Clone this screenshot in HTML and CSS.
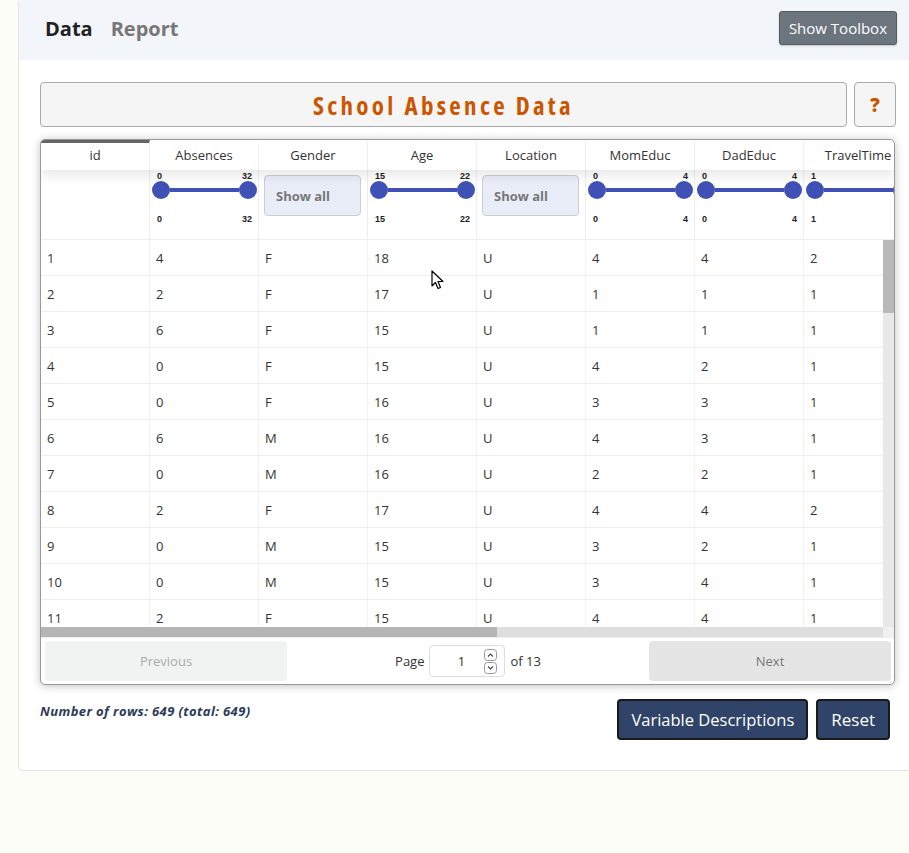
FILE: index.html
```html
<!DOCTYPE html>
<html>
<head>
<meta charset="utf-8">
<link rel="stylesheet" href="styles.css">
</head>
<body>
<div class="card">
  <div class="topbar">
    <div class="tabs">
      <span class="tab active">Data</span>
      <span class="tab">Report</span>
    </div>
    <button class="toolbox-btn">Show Toolbox</button>
  </div>
  <div class="content">
    <div class="title-row">
      <div class="title-box">School Absence Data</div>
      <div class="help-box">?</div>
    </div>
    <div class="grid-box">
      <div class="thead">
        <div class="hrow">
          <div class="hc sorted">id</div>
          <div class="hc">Absences</div>
          <div class="hc">Gender</div>
          <div class="hc">Age</div>
          <div class="hc">Location</div>
          <div class="hc">MomEduc</div>
          <div class="hc">DadEduc</div>
          <div class="hc">TravelTime</div>
        </div>
        <div class="frow">
          <div class="fc"></div>
          <div class="fc"><div class="slider"><div class="lbls"><span>0</span><span>32</span></div><div class="track"><i class="knob"></i><i class="bar"></i><i class="knob"></i></div><div class="lbls low"><span>0</span><span>32</span></div></div></div>
          <div class="fc"><div class="select">Show all</div></div>
          <div class="fc"><div class="slider"><div class="lbls"><span>15</span><span>22</span></div><div class="track"><i class="knob"></i><i class="bar"></i><i class="knob"></i></div><div class="lbls low"><span>15</span><span>22</span></div></div></div>
          <div class="fc"><div class="select">Show all</div></div>
          <div class="fc"><div class="slider"><div class="lbls"><span>0</span><span>4</span></div><div class="track"><i class="knob"></i><i class="bar"></i><i class="knob"></i></div><div class="lbls low"><span>0</span><span>4</span></div></div></div>
          <div class="fc"><div class="slider"><div class="lbls"><span>0</span><span>4</span></div><div class="track"><i class="knob"></i><i class="bar"></i><i class="knob"></i></div><div class="lbls low"><span>0</span><span>4</span></div></div></div>
          <div class="fc"><div class="slider"><div class="lbls"><span>1</span><span>4</span></div><div class="track"><i class="knob"></i><i class="bar"></i><i class="knob"></i></div><div class="lbls low"><span>1</span><span>4</span></div></div></div>
        </div>
      </div>
      <div class="tbody-wrap">
        <div class="tbody">
          <div class="row"><div>1</div><div>4</div><div>F</div><div>18</div><div>U</div><div>4</div><div>4</div><div>2</div></div>
          <div class="row"><div>2</div><div>2</div><div>F</div><div>17</div><div>U</div><div>1</div><div>1</div><div>1</div></div>
          <div class="row"><div>3</div><div>6</div><div>F</div><div>15</div><div>U</div><div>1</div><div>1</div><div>1</div></div>
          <div class="row"><div>4</div><div>0</div><div>F</div><div>15</div><div>U</div><div>4</div><div>2</div><div>1</div></div>
          <div class="row"><div>5</div><div>0</div><div>F</div><div>16</div><div>U</div><div>3</div><div>3</div><div>1</div></div>
          <div class="row"><div>6</div><div>6</div><div>M</div><div>16</div><div>U</div><div>4</div><div>3</div><div>1</div></div>
          <div class="row"><div>7</div><div>0</div><div>M</div><div>16</div><div>U</div><div>2</div><div>2</div><div>1</div></div>
          <div class="row"><div>8</div><div>2</div><div>F</div><div>17</div><div>U</div><div>4</div><div>4</div><div>2</div></div>
          <div class="row"><div>9</div><div>0</div><div>M</div><div>15</div><div>U</div><div>3</div><div>2</div><div>1</div></div>
          <div class="row"><div>10</div><div>0</div><div>M</div><div>15</div><div>U</div><div>3</div><div>4</div><div>1</div></div>
          <div class="row"><div>11</div><div>2</div><div>F</div><div>15</div><div>U</div><div>4</div><div>4</div><div>1</div></div>
        </div>
        <div class="vscroll"><div class="vthumb"></div></div>
      </div>
      <div class="hscroll"><div class="htrack"><div class="hthumb"></div></div><div class="corner"></div></div>
      <div class="pager">
        <button class="pbtn prev">Previous</button>
        <div class="pinfo">
          <span>Page</span>
          <div class="pinput"><span class="pnum">1</span>
            <svg class="spin" width="13" height="25" viewBox="0 0 13 25">
              <rect x="0.5" y="0.5" width="12" height="11" rx="3" fill="#fff" stroke="#999"/>
              <rect x="0.5" y="13.5" width="12" height="11" rx="3" fill="#fff" stroke="#999"/>
              <path d="M4 7.5 L6.5 5 L9 7.5" fill="none" stroke="#444" stroke-width="1.1"/>
              <path d="M4 17.5 L6.5 20 L9 17.5" fill="none" stroke="#444" stroke-width="1.1"/>
            </svg>
          </div>
          <span>of 13</span>
        </div>
        <button class="pbtn next">Next</button>
      </div>
    </div>
    <div class="footer-row">
      <div class="count">Number of rows: 649 (total: 649)</div>
      <div class="actions">
        <button class="navy-btn">Variable Descriptions</button>
        <button class="navy-btn reset">Reset</button>
      </div>
    </div>
  </div>
</div>
<svg class="cursor" width="13" height="21" viewBox="0 0 13 21"><path d="M1 1 L1 16 L4.5 12.5 L7 18.5 L9.5 17.5 L7 11.5 L12 11.5 Z" fill="#fff" stroke="#000" stroke-width="1.2" stroke-linejoin="round"/></svg>
</body>
</html>
```
FILE: styles.css
```css
html, body {
  margin: 0;
  padding: 0;
  background: #fdfdf7;
  overflow: hidden;
  font-family: "Open Sans", "Liberation Sans", sans-serif;
  color: #333;
}
body { position: relative; width: 909px; height: 853px; }

.card {
  margin-left: 18px;
  margin-top: -1px;
  width: 900px;
  height: 772px;
  box-sizing: border-box;
  background: #fff;
  border: 1px solid #e2e2e2;
  border-radius: 4px;
}

.topbar {
  height: 60px;
  background: #f2f5f9;
  display: flex;
  align-items: center;
  justify-content: space-between;
  padding: 0 20px 3px 26px;
  box-sizing: border-box;
}
.tabs { display: flex; gap: 18px; }
.tab { font-size: 20px; font-weight: 700; color: #777; }
.tab.active { color: #222; }
.toolbox-btn {
  font-family: "Open Sans", sans-serif;
  font-size: 15px;
  color: #fff;
  background: #6c757d;
  border: 1px solid #555d63;
  border-radius: 3px;
  height: 34px;
  padding: 0 9px;
  margin-bottom: 1px;
  box-shadow: 0 1px 2px rgba(0,0,0,0.2);
}

.content { padding: 22px 21px 0 21px; }

.title-row { display: flex; gap: 7px; height: 45px; }
.title-box {
  flex: 1;
  background: #f5f5f5;
  border: 1px solid #aaa;
  border-radius: 4px;
  display: flex;
  align-items: center;
  justify-content: center;
  color: #cc5500;
  font-weight: 700;
  font-size: 25px;
  font-stretch: 75%;
  letter-spacing: 3.3px;
}
.help-box {
  width: 42px;
  box-sizing: border-box;
  background: #f5f5f5;
  border: 1px solid #aaa;
  border-radius: 4px;
  display: flex;
  align-items: center;
  justify-content: center;
  color: #cc5500;
  font-weight: 800;
  font-size: 19px;
}

.grid-box {
  margin-top: 12px;
  width: 855px;
  box-sizing: border-box;
  border: 1px solid #999;
  border-radius: 5px;
  overflow: hidden;
  box-shadow: 0 1px 8px rgba(0,0,0,0.25);
  background: #fff;
}

.thead {
  overflow: hidden;
  position: relative;
}
.hrow, .frow, .row {
  display: grid;
  grid-template-columns: repeat(8, 109px);
}
.hrow {
  height: 30px;
  box-shadow: 0 6px 12px rgba(0,0,0,0.09);
  position: relative;
  z-index: 1;
}
.hc {
  border-right: 1px solid #eee;
  border-top: 3px solid transparent;
  box-sizing: border-box;
  display: flex;
  align-items: center;
  justify-content: center;
  font-size: 13px;
  color: #333;
  padding-bottom: 3px;
}
.hc.sorted { border-top-color: #666; }

.frow { height: 70px; border-bottom: 1px solid #eee; box-sizing: border-box; }
.fc {
  border-right: 1px solid #eee;
  box-sizing: border-box;
  padding: 1px 1px 0 2px;
}
.slider { display: flex; flex-direction: column; }
.lbls {
  display: flex;
  justify-content: space-between;
  padding: 0 5px 0 5px;
  font-family: "Liberation Sans", Arial, sans-serif;
  font-weight: 700;
  font-size: 9px;
  line-height: 10px;
  color: #222;
}
.lbls.low { margin-top: 15px; }
.track { display: flex; align-items: center; height: 18px; }
.knob {
  width: 18px;
  height: 18px;
  border-radius: 50%;
  background: #3f51b5;
  flex: none;
}
.bar { flex: 1; height: 4px; background: #3f51b5; }

.select {
  margin: 4px 0 0 3px;
  width: 97px;
  height: 41px;
  box-sizing: border-box;
  background: #e8edf7;
  border: 1px solid #c9cdd4;
  border-radius: 4px;
  display: flex;
  align-items: center;
  padding-left: 11px;
  font-size: 13px;
  font-weight: 700;
  color: #777;
}

.tbody-wrap { display: flex; height: 387px; }
.tbody { flex: 1; overflow: hidden; }
.row {
  height: 36px;
  box-sizing: border-box;
  border-bottom: 1px solid #eee;
}
.row > div {
  border-right: 1px solid #f2f2f2;
  display: flex;
  align-items: center;
  padding-left: 6px;
  font-size: 13px;
  color: #333;
}
.vscroll { width: 11px; background: #e8e8e8; flex: none; }
.vthumb { height: 73px; background: #b8b8b8; }

.hscroll { display: flex; height: 10px; }
.htrack { flex: 1; background: #dedede; }
.hthumb { width: 456px; height: 100%; background: #b5b5b5; }
.corner { width: 11px; background: #f0f0f0; }

.pager {
  display: flex;
  align-items: center;
  padding: 3px 3px 3px 4px;
  height: 47px;
  box-sizing: border-box;
  border-top: 1px solid #eee;
}
.pbtn {
  width: 242px;
  height: 40px;
  border: none;
  border-radius: 4px;
  font-family: "Open Sans", sans-serif;
  font-size: 13px;
}
.prev { background: #f1f2f2; color: #aaa; }
.next { background: #e5e5e5; color: #777; }
.pinfo {
  flex: 1;
  display: flex;
  align-items: center;
  justify-content: center;
  gap: 5px;
  font-size: 13px;
  color: #333;
}
.pinput {
  width: 76px;
  height: 32px;
  box-sizing: border-box;
  border: 1px solid #ddd;
  border-radius: 4px;
  display: flex;
  align-items: center;
  padding-left: 27px;
  gap: 19px;
}
.pnum { width: 8px; text-align: center; }
.spin { display: block; }

.footer-row {
  display: flex;
  justify-content: space-between;
  align-items: flex-start;
  padding-top: 14px;
  padding-right: 6px;
}
.count {
  font-size: 13px;
  font-weight: 700;
  font-style: italic;
  color: #2b3b58;
  letter-spacing: 0.4px;
  margin-top: 3px;
}
.actions { display: flex; gap: 8px; }
.navy-btn {
  height: 41px;
  background: #2f4468;
  color: #fff;
  border: 2px solid #1a1a1a;
  border-radius: 4px;
  padding: 0 12px;
  font-family: "Open Sans", sans-serif;
  font-size: 16.5px;
}
.navy-btn.reset { padding: 0 13px; font-size: 17px; }

.cursor { position: absolute; left: 431px; top: 270px; }
```
